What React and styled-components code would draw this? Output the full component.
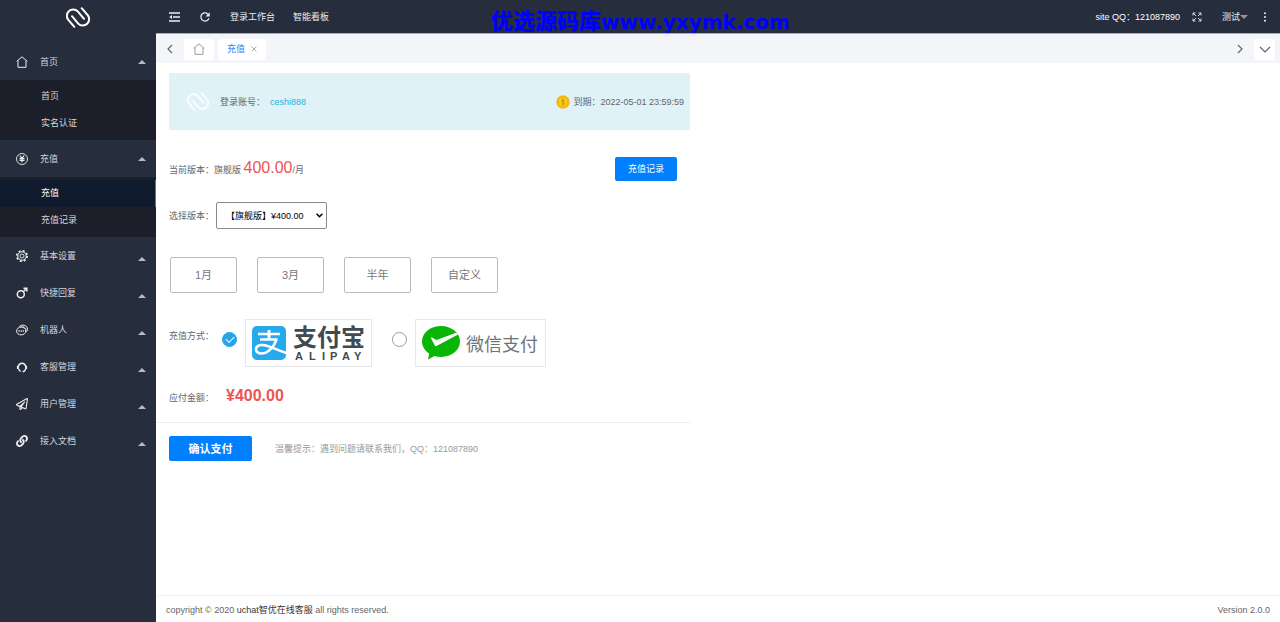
import React, { useState } from 'react'
import styled, { createGlobalStyle } from 'styled-components'
import { FaRegPaperPlane, FaLink } from 'react-icons/fa'
import { MdRefresh } from 'react-icons/md'

const closedMenus = [
    { name: '基本设置', icon: <GearIcon /> },
    { name: '快捷回复', icon: <MaleIcon /> },
    { name: '机器人', icon: <ChatIcon /> },
    { name: '客服管理', icon: <HeadsetIcon /> },
    { name: '用户管理', icon: <FaRegPaperPlane /> },
    { name: '接入文档', icon: <FaLink /> },
]

const periods = ['1月', '3月', '半年', '自定义']

export default function App() {
    const [pay, setPay] = useState('alipay')

    return (
        <Page>
            <GlobalStyle />
            <Sidebar>
                <LogoBox><ClipLogo /></LogoBox>
                <nav>
                    <MenuItem href="#"><HomeIcon /><span>首页</span><Caret /></MenuItem>
                    <SubMenu>
                        <SubItem href="#">首页</SubItem>
                        <SubItem href="#">实名认证</SubItem>
                    </SubMenu>
                    <MenuItem href="#"><YenIcon /><span>充值</span><Caret /></MenuItem>
                    <SubMenu>
                        <SubItem href="#" $active>充值</SubItem>
                        <SubItem href="#">充值记录</SubItem>
                    </SubMenu>
                    {closedMenus.map((m) => (
                        <MenuItem href="#" key={m.name}>{m.icon}<span>{m.name}</span><Caret $low /></MenuItem>
                    ))}
                </nav>
            </Sidebar>
            <Main>
                <Header>
                    <HeaderGroup>
                        <IconButton aria-label="收起菜单"><FoldIcon /></IconButton>
                        <IconButton aria-label="刷新"><MdRefresh size={14} /></IconButton>
                        <HeaderLink href="#">登录工作台</HeaderLink>
                        <HeaderLink href="#">智能看板</HeaderLink>
                    </HeaderGroup>
                    <HeaderGroup $right>
                        <Contact>site QQ：121087890</Contact>
                        <IconButton aria-label="全屏"><ExpandIcon /></IconButton>
                        <UserLink href="#">测试<DownCaret /></UserLink>
                        <IconButton aria-label="更多"><DotsIcon /></IconButton>
                    </HeaderGroup>
                    <Watermark><b>优选源码库</b>www.yxymk.com</Watermark>
                </Header>
                <TabBar>
                    <TabArrow aria-label="上一个"><Chevron d="M8 2L4 6l4 4" /></TabArrow>
                    <Tab href="#" aria-label="首页"><HomeIcon /></Tab>
                    <Tab href="#" $active>充值<CloseIcon /></Tab>
                    <Spacer />
                    <TabArrow aria-label="下一个"><Chevron d="M4 2l4 4-4 4" /></TabArrow>
                    <TabArrow aria-label="标签列表" $filled><Chevron d="M1 4l5 5 5-5" /></TabArrow>
                </TabBar>
                <Content>
                    <Banner>
                        <ClipLogo />
                        <span>登录账号：</span>
                        <Account>ceshi888</Account>
                        <Expire><CoinIcon />到期：2022-05-01 23:59:59</Expire>
                    </Banner>
                    <VersionRow>
                        <p>当前版本：旗舰版 <Price>400.00</Price>/月</p>
                        <RecordButton>充值记录</RecordButton>
                    </VersionRow>
                    <SelectRow>
                        <label htmlFor="version">选择版本：</label>
                        <SelectBox>
                            <Select id="version">
                                <option>【旗舰版】¥400.00</option>
                            </Select>
                            <SelectArrow />
                        </SelectBox>
                    </SelectRow>
                    <PeriodRow>
                        {periods.map((p) => <PeriodButton key={p}>{p}</PeriodButton>)}
                    </PeriodRow>
                    <PayRow>
                        <PayTitle>充值方式：</PayTitle>
                        <PayOption>
                            <Radio type="radio" name="pay" aria-label="支付宝" checked={pay === 'alipay'} onChange={() => setPay('alipay')} />
                            <PayBox><AlipayLogo /></PayBox>
                        </PayOption>
                        <PayOption>
                            <Radio type="radio" name="pay" aria-label="微信支付" checked={pay === 'wechat'} onChange={() => setPay('wechat')} />
                            <PayBox><WechatLogo /></PayBox>
                        </PayOption>
                    </PayRow>
                    <AmountRow>
                        <span>应付金额：</span>
                        <Amount>¥400.00</Amount>
                    </AmountRow>
                    <ConfirmRow>
                        <ConfirmButton>确认支付</ConfirmButton>
                        <Tip>温馨提示：遇到问题请联系我们，QQ：121087890</Tip>
                    </ConfirmRow>
                </Content>
                <Footer>
                    <span>copyright © 2020 <FooterLink href="#">uchat智优在线客服</FooterLink> all rights reserved.</span>
                    <span>Version 2.0.0</span>
                </Footer>
            </Main>
        </Page>
    )
}

/* icons */

function ClipLogo() {
    return (
        <svg width="24" height="21" viewBox="0 0 24 21" fill="none" stroke="currentColor" strokeWidth="2" strokeLinecap="round">
            <path d="M8.3 19.8L2.6 13.2A6.2 6.2 0 0 1 11.8 4.4L18 11.8" />
            <path d="M15.7 1.2L21.4 7.8A6.2 6.2 0 0 1 12.2 16.6L6 9.2" />
        </svg>
    )
}

function HomeIcon() {
    return (
        <svg width="12" height="12" viewBox="0 0 12 12" fill="none" stroke="currentColor">
            <path d="M.7 5.4L6 .8l5.3 4.6M2 4.5v6.8h8V4.5" />
        </svg>
    )
}

function YenIcon() {
    return (
        <svg width="12" height="12" viewBox="0 0 12 12" fill="none" stroke="currentColor">
            <circle cx="6" cy="6" r="5.5" strokeWidth=".9" />
            <path d="M3.8 2.7L6 5.3l2.200-2.600M6 5.300v4M3.500 5.600h5M3.500 7.400h5" strokeWidth="1.200" />
        </svg>
    )
}

function GearIcon() {
    return (
        <svg width="12" height="12" viewBox="0 0 12 12" fill="none" stroke="currentColor">
            <circle cx="6" cy="6" r="5.200" strokeWidth="1.600" strokeDasharray="2.040" />
            <circle cx="6" cy="6" r="4.200" />
            <circle cx="6" cy="6" r="2" strokeWidth=".9" />
        </svg>
    )
}

function MaleIcon() {
    return (
        <svg width="12" height="12" viewBox="0 0 12 12" fill="none" stroke="currentColor" strokeWidth="1.500">
            <circle cx="4.800" cy="7.200" r="3.500" />
            <path d="M7.300 4.700l3.200-3.200M7.500 1.300h3.300v3.300" />
        </svg>
    )
}

function ChatIcon() {
    return (
        <svg width="12" height="12" viewBox="0 0 12 12" fill="none" stroke="currentColor">
            <ellipse cx="5.200" cy="7" rx="4.600" ry="3.900" />
            <path d="M3.200 2.600C6-.2 11.500 1.200 11.500 5.200c0 1.300-.6 2.200-1.500 2.900" />
            <path d="M4.500 2.900c3.300-1 5.600.800 5.700 3.600" strokeWidth=".7" />
            <path d="M2.500 7h1.200M4.600 7h1.200M6.700 7h1.200" strokeWidth="1.300" />
        </svg>
    )
}

function HeadsetIcon() {
    return (
        <svg width="12" height="12" viewBox="0 0 12 12" fill="none" stroke="currentColor" strokeWidth="1.300">
            <path d="M2.300 5.500a3.800 4.200 0 0 1 7.400 0" />
            <path d="M1.900 4.800v3.200M10.100 4.800v3.200" strokeWidth="2" />
            <path d="M2.600 8c.4 1.400 1 2 2.200 2.500M9.600 8c-.4 1.700-1.400 2.600-3 2.700" />
        </svg>
    )
}

function FoldIcon() {
    return (
        <svg width="11" height="10" viewBox="0 0 11 10" fill="none" stroke="currentColor" strokeWidth="1.300">
            <path d="M0 1h11M4 5h7M0 9h11" />
            <path d="M3 3v4L.3 5z" fill="currentColor" stroke="none" />
        </svg>
    )
}

function ExpandIcon() {
    return (
        <svg width="10" height="10" viewBox="0 0 10 10" fill="none" stroke="currentColor" strokeWidth=".9">
            <path d="M1 3.500V1h2.500M1 1l3 3M6.500 1H9v2.500M9 1L6 4M1 6.500V9h2.500M1 9l3-3M9 6.500V9H6.500M9 9L6 6" />
        </svg>
    )
}

function DotsIcon() {
    return (
        <svg width="10" height="10" viewBox="0 0 10 10" fill="currentColor">
            <circle cx="5" cy="1.200" r="1" />
            <circle cx="5" cy="5" r="1" />
            <circle cx="5" cy="8.800" r="1" />
        </svg>
    )
}

function Chevron({ d }) {
    return (
        <svg width="12" height="12" viewBox="0 0 12 12" fill="none" stroke="currentColor" strokeWidth="1.200">
            <path d={d} />
        </svg>
    )
}

function CloseIcon() {
    return (
        <svg width="6" height="6" viewBox="0 0 6 6" stroke="#aaa">
            <path d="M.5.5l5 5M5.500.5l-5 5" />
        </svg>
    )
}

function CoinIcon() {
    return (
        <svg width="14" height="14" viewBox="0 0 14 14">
            <circle cx="7" cy="7" r="6.700" fill="#f5b90f" />
            <circle cx="7" cy="7" r="4.800" fill="#f9cf1c" stroke="#e8a80c" strokeWidth=".6" />
            <path d="M8.700 5.300C8 4.300 5.500 4.400 5.500 5.800c0 1.500 3.200.9 3.200 2.500 0 1.400-2.700 1.500-3.500.4M7 3.800v6.400" fill="none" stroke="#d08d08" strokeWidth=".9" />
        </svg>
    )
}

function AlipayLogo() {
    return (
        <svg width="113" height="36" viewBox="0 0 113 36">
            <rect x="0" y="1" width="34" height="34" rx="5" fill="#27a9ee" />
            <g fill="none" stroke="#fff">
                <path d="M6 9h22M8 14.500h17.500" strokeWidth="2.400" />
                <path d="M17 5v9.500" strokeWidth="3" />
                <path d="M24.500 14.500C22.500 21 16.500 28.500 9.500 28.500c-3.500 0-5.500-1.800-5.500-4.300 0-3 3-4.400 6.500-4.200 7 .4 13 4.800 24 8" strokeWidth="2.600" />
            </g>
            <text x="41" y="21" fontSize="24" fontWeight="700" fill="#414a4f">支付宝</text>
            <text x="43 57 70 78 90 102" y="35" fontSize="11" fontWeight="700" fill="#414a4f">ALIPAY</text>
        </svg>
    )
}

function WechatLogo() {
    return (
        <svg width="117" height="36" viewBox="0 0 117 36">
            <path d="M19 1C8.500 1 0 7.800 0 16.500c0 5 2.800 9.300 7.200 12.100L6 34.500l6.500-3.600c2 .7 4.200 1 6.500 1 10.500 0 19-6.800 19-15.400S29.500 1 19 1z" fill="#09b606" />
            <path d="M36 9.500L14.500 21c-.8.400-1.400.1-1.700-.6L8.800 12.800c1.800-.9 3.200 1.700 5.700 2.300L34 7.800z" fill="#fff" />
            <text x="44" y="26" fontSize="18" fill="#6f7478">微信支付</text>
        </svg>
    )
}

/* layout */

const GlobalStyle = createGlobalStyle`
    * {
        box-sizing: border-box;
    }
    body {
        margin: 0;
        background: #fff;
        color: #666;
        font: 9px/14px "Liberation Sans", "Noto Sans CJK SC", sans-serif;
    }
    a {
        color: inherit;
        text-decoration: none;
    }
    p {
        margin: 0;
    }
    button,
    select {
        font: inherit;
        cursor: pointer;
    }
    svg {
        display: block;
        flex-shrink: 0;
    }
`
const Page = styled.div`
    display: flex;
    min-height: 100vh;
`
const Sidebar = styled.aside`
    width: 156px;
    flex-shrink: 0;
    background: #262d3c;
    color: #d3d6dc;
`
const LogoBox = styled.div`
    display: flex;
    align-items: center;
    justify-content: center;
    height: 34px;
    margin-bottom: 9px;
    color: #fff;
`
const MenuItem = styled.a`
    display: flex;
    align-items: center;
    gap: 12px;
    height: 37px;
    padding: 0 10px 0 16px;
    svg {
        width: 12px;
        height: 12px;
        color: #eee;
    }
`
const Caret = styled.i`
    margin-left: auto;
    margin-top: ${(props) => (props.$low ? '6px' : '0')};
    border: 4px solid transparent;
    border-top: 0;
    border-bottom-color: #b7bac0;
`
const SubMenu = styled.div`
    padding: 3px 0;
    background: #1c1f29;
`
const SubItem = styled.a`
    display: block;
    padding-left: 41px;
    line-height: 27px;
    color: ${(props) => (props.$active ? '#fff' : '#d3d6dc')};
    background: ${(props) => (props.$active ? '#101a2d' : 'none')};
    border-right: ${(props) => (props.$active ? '1px solid #1e88ef' : '0')};
`
const Main = styled.main`
    display: flex;
    flex-direction: column;
    flex: 1;
    min-width: 0;
`
const Header = styled.header`
    position: relative;
    display: flex;
    justify-content: space-between;
    height: 34px;
    padding: 0 10px 0 13px;
    background: #262d3c;
    border-bottom: 1px solid #a9abb5;
    color: #eceef2;
`
const HeaderGroup = styled.div`
    display: flex;
    align-items: center;
    gap: ${(props) => (props.$right ? '12px' : '18px')};
`
const IconButton = styled.button`
    padding: 0;
    border: 0;
    background: none;
    color: inherit;
`
const HeaderLink = styled.a`
    color: inherit;
`
const Contact = styled.span`
    color: #fff;
`
const UserLink = styled.a`
    display: flex;
    align-items: center;
    margin-left: 8px;
`
const DownCaret = styled.i`
    border: 4px solid transparent;
    border-bottom: 0;
    border-top-color: #8f939c;
`
const Watermark = styled.div`
    position: absolute;
    top: 9px;
    left: 335px;
    font: 700 20px/26px "DejaVu Sans", "Noto Sans CJK SC", sans-serif;
    color: #0000fe;
    white-space: nowrap;
    b {
        font-size: 22px;
        font-weight: 900;
    }
`
const TabBar = styled.div`
    display: flex;
    align-items: center;
    gap: 4px;
    height: 29px;
    padding: 1px 5px 0 3px;
    background: #f4f5f8;
`
const TabArrow = styled.button`
    display: flex;
    align-items: center;
    justify-content: center;
    width: 21px;
    height: 21px;
    padding: 0;
    border: 0;
    border-radius: 2px;
    background: ${(props) => (props.$filled ? '#fff' : 'none')};
    color: #666;
`
const Tab = styled.a`
    display: flex;
    align-items: center;
    gap: 6px;
    height: 21px;
    padding: 0 9px;
    border-radius: 2px;
    background: #fff;
    color: ${(props) => (props.$active ? '#1e80ff' : '#999')};
`
const Spacer = styled.div`
    flex: 1;
`
const Content = styled.section`
    flex: 1;
    width: 534px;
    max-width: 100%;
    padding-top: 10px;
`
const Row = styled.div`
    display: flex;
    align-items: center;
    margin-left: 13px;
`
const Banner = styled(Row)`
    height: 57px;
    padding: 0 6px 0 18px;
    background: #dff2f8;
    > svg {
        width: 22px;
        margin-right: 11px;
        color: #fff;
        opacity: 0.9;
    }
`
const Account = styled.span`
    margin-left: 5px;
    color: #32b1d8;
`
const Expire = styled.span`
    display: flex;
    align-items: center;
    gap: 3px;
    margin-left: auto;
`
const VersionRow = styled(Row)`
    justify-content: space-between;
    margin-top: 27px;
    padding-right: 13px;
`
const Price = styled.span`
    font-size: 16px;
    color: #ee5353;
`
const RecordButton = styled.button`
    width: 62px;
    height: 24px;
    padding: 0;
    border: 0;
    border-radius: 2px;
    background: #0080ff;
    color: #fff;
`
const SelectRow = styled(Row)`
    gap: 2px;
    margin-top: 21px;
`
const SelectBox = styled.div`
    position: relative;
`
const Select = styled.select`
    display: block;
    appearance: none;
    width: 111px;
    height: 27px;
    padding: 0 16px 0 9px;
    border: 1px solid #8a8a8a;
    border-radius: 2px;
    background: #fff;
    color: #000;
`
const SelectArrow = styled((props) => (
    <svg {...props} width="7" height="5" viewBox="0 0 7 5" fill="none" stroke="#000" strokeWidth="1.500">
        <path d="M.6.8l2.900 2.900L6.400.8" />
    </svg>
))`
    position: absolute;
    top: 11px;
    right: 4px;
    pointer-events: none;
`
const PeriodRow = styled(Row)`
    gap: 20px;
    margin-top: 28px;
    padding-left: 1px;
`
const PeriodButton = styled.button`
    width: 67px;
    height: 36px;
    padding: 0;
    border: 1px solid #bbb;
    border-radius: 2px;
    background: #fff;
    color: #777;
    font-size: 11px;
`
const PayRow = styled(Row)`
    align-items: flex-start;
    margin-top: 26px;
`
const PayTitle = styled.span`
    width: 53px;
    line-height: 34px;
`
const PayOption = styled.label`
    display: flex;
    align-items: flex-start;
    gap: 8px;
    margin-right: 20px;
`
const Radio = styled.input`
    appearance: none;
    width: 15px;
    height: 15px;
    margin: 13px 0 0;
    border: 1px solid #999;
    border-radius: 50%;
    background: #fff;
    &:checked {
        border-color: #27a5ec;
        background: #27a5ec;
    }
    &:checked::after {
        content: "";
        display: block;
        width: 7px;
        height: 4px;
        margin: 3px;
        border: solid #fff;
        border-width: 0 0 1px 1px;
        transform: rotate(-45deg);
    }
`
const PayBox = styled.span`
    display: flex;
    align-items: center;
    height: 48px;
    padding: 0 6px;
    border: 1px solid #e8e8e8;
`
const AmountRow = styled(Row)`
    align-items: baseline;
    gap: 12px;
    margin-top: 17px;
    line-height: 24px;
`
const Amount = styled.strong`
    font-size: 16px;
    color: #ee5353;
`
const ConfirmRow = styled.div`
    display: flex;
    align-items: center;
    gap: 23px;
    margin-top: 12px;
    padding: 13px 0 0 13px;
    border-top: 1px solid #eee;
`
const ConfirmButton = styled.button`
    width: 83px;
    height: 25px;
    padding: 0;
    border: 0;
    border-radius: 2px;
    background: #0080ff;
    color: #fff;
    font-size: 11px;
    font-weight: 700;
`
const Tip = styled.span`
    color: #999;
`
const Footer = styled.footer`
    display: flex;
    align-items: center;
    justify-content: space-between;
    height: 27px;
    padding: 2px 10px 0;
    border-top: 1px solid #f2f2f2;
`
const FooterLink = styled.a`
    color: #333;
`
